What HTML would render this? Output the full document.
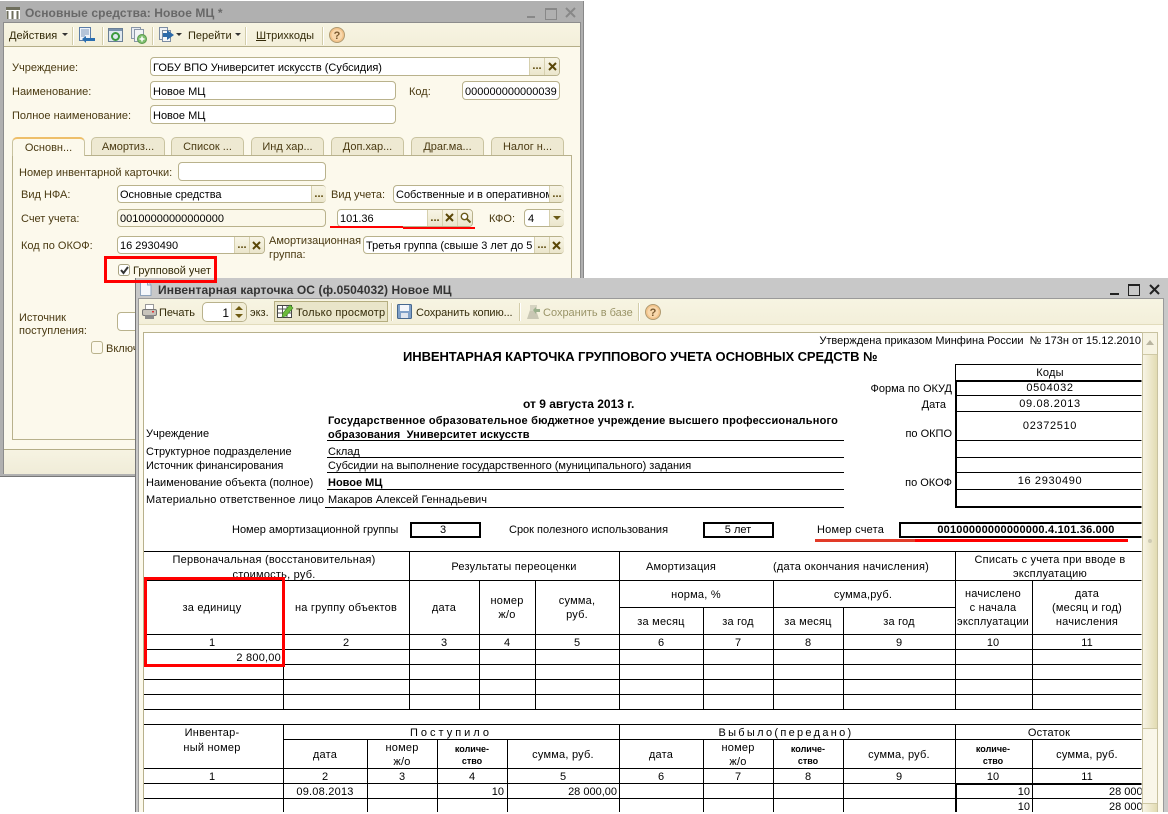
<!DOCTYPE html>
<html lang="ru"><head><meta charset="utf-8"><title>Основные средства</title>
<style>
html,body{margin:0;padding:0;background:#fff}
body{position:relative;width:1168px;height:812px;overflow:hidden;font:11px/14px "Liberation Sans",Arial,sans-serif;color:#000}
div,span.a,svg.a{position:absolute}
.t{position:absolute;white-space:nowrap;margin-top:-6px}
.c{width:300px;margin-left:-150px;text-align:center}
.r{width:400px;margin-left:-400px;text-align:right}
.b{font-weight:bold}
.l{color:#4a3a12}
.f{background:#fff;border:1px solid #b9b28c;border-radius:4px;box-sizing:border-box}
.ro{background:#fbf8ea}
.fb{background:linear-gradient(#f8f5e6,#ebe6cc);border-left:1px solid #d6d0ae;box-sizing:border-box;width:15px;color:#5a4708;text-align:center;font-weight:bold;font-size:11px;line-height:20px}
.tab{background:#eee9d2;border:1px solid #c9c3a0;border-bottom:none;border-radius:5px 5px 0 0;box-sizing:border-box;height:18px;top:137px;color:#4a3a12;text-align:center;line-height:19px;white-space:nowrap}
.sep{width:1px;background:#d3cdaa;border-right:1px solid #fff}
.h{height:1px;background:#000}
.v{width:1px;background:#000}
.red{background:#f00}
.s9{font-size:9px;font-weight:bold;letter-spacing:0}
.sp{letter-spacing:.22px}
.d{letter-spacing:.65px}
</style></head><body>

<!-- BACK WINDOW -->
<div style="left:0;top:1px;width:584px;height:476px;background:#b0b0b0;border-right:1px solid #888;border-bottom:1px solid #777;box-sizing:border-box"></div>
<div style="left:3px;top:22px;width:578px;height:452px;background:#fcf9ec;border:1px solid #8c8c8c;box-sizing:border-box"></div>
<div style="left:4px;top:23px;width:576px;height:23px;background:linear-gradient(#f7f4e2,#f3efda);border-bottom:1px solid #b5ae88"></div>
<div style="left:4px;top:449px;width:576px;height:24px;background:linear-gradient(#f6f3e2,#f0ecd8);border-top:1px solid #b5ae88"></div>

<svg class="a" style="left:6px;top:6px" width="15" height="14" viewBox="0 0 15 14"><rect x="0" y="1" width="14" height="12" fill="#fff"/><rect x="0" y="1" width="14" height="3" fill="#6e6e5c"/><path d="M1.500 5v8M6.500 5v8M11.500 5v8" stroke="#6e6e5c" stroke-width="2"/></svg>
<span class="t b" style="left:25px;top:12px;color:#686868;font-size:12px;letter-spacing:.1px">Основные средства: Новое МЦ *</span>
<div style="left:527px;top:16px;width:8px;height:2px;background:#888"></div>
<div style="left:545px;top:8px;width:10px;height:9px;border:1px solid #888;border-top-width:2px"></div>
<svg class="a" style="left:565px;top:7px" width="11" height="11" viewBox="0 0 11 11"><path d="M1 1l9 9M10 1l-9 9" stroke="#888" stroke-width="2"/></svg>

<!-- back toolbar -->
<span class="t l" style="left:9px;top:35px;color:#332a08">Действия</span>
<svg class="a" style="left:62px;top:33px" width="6" height="4"><path d="M0 0h6L3 3z" fill="#333"/></svg>
<div class="sep" style="left:72px;top:27px;height:18px"></div>
<svg class="a" style="left:79px;top:27px" width="17" height="17" viewBox="0 0 17 17"><rect x=".5" y=".5" width="11" height="13" fill="#eef3fa" stroke="#5b7da8"/><path d="M2 3h8M2 5h8M2 7h8M2 9h4" stroke="#7a95b8"/><path d="M3 12l4-3v2h9v3H7v2z" fill="#2a6eb0"/></svg>
<div class="sep" style="left:102px;top:27px;height:18px"></div>
<svg class="a" style="left:108px;top:28px" width="15" height="15" viewBox="0 0 15 15"><rect x=".5" y=".5" width="14" height="13" fill="#dfe8ef" stroke="#6a7f96"/><rect x="1" y="1" width="13" height="2" fill="#7a93ad"/><circle cx="7.500" cy="8.500" r="3.500" fill="none" stroke="#3d9a3d" stroke-width="2"/></svg>
<svg class="a" style="left:131px;top:27px" width="16" height="17" viewBox="0 0 16 17"><rect x=".5" y=".5" width="9" height="11" fill="#e8ecf2" stroke="#8a97a8"/><rect x="3.500" y="2.500" width="9" height="12" fill="#f1f3f6" stroke="#8a97a8"/><circle cx="11" cy="12" r="4.500" fill="#7fbf6f" stroke="#5a9a4c"/><path d="M11 9.500v5M8.500 12h5" stroke="#fff" stroke-width="1.500"/></svg>
<div class="sep" style="left:152px;top:27px;height:18px"></div>
<svg class="a" style="left:159px;top:27px" width="16" height="17" viewBox="0 0 16 17"><rect x=".5" y=".5" width="8" height="12" fill="#eef1f5" stroke="#7d8da3"/><rect x="3.500" y="3.500" width="8" height="11" fill="#f5f6f8" stroke="#7d8da3"/><path d="M4 6h4V3l7 5-7 5v-3H4z" fill="#2c69a8"/></svg>
<svg class="a" style="left:176px;top:33px" width="6" height="4"><path d="M0 0h6L3 3z" fill="#333"/></svg>
<span class="t" style="left:188px;top:35px;color:#332a08">Перейти</span>
<svg class="a" style="left:235px;top:33px" width="6" height="4"><path d="M0 0h6L3 3z" fill="#333"/></svg>
<div class="sep" style="left:245px;top:27px;height:18px"></div>
<span class="t" style="left:256px;top:35px;color:#332a08"><u>Ш</u>трихкоды</span>
<div class="sep" style="left:322px;top:27px;height:18px"></div>
<svg class="a" style="left:329px;top:27px" width="16" height="16" viewBox="0 0 16 16"><circle cx="8" cy="8" r="7.500" fill="#f3c48c" stroke="#b09a70"/><circle cx="8" cy="8" r="5.500" fill="#f8d8ac"/><text x="8" y="12" font-family="Liberation Sans" font-size="11" font-weight="bold" text-anchor="middle" fill="#7a5a30">?</text></svg>

<!-- back fields -->
<span class="t l" style="left:12px;top:67px">Учреждение:</span>
<div class="f" style="left:150px;top:57px;width:410px;height:19px;overflow:hidden"></div>
<span class="t" style="left:153px;top:67px">ГОБУ ВПО Университет искусств (Субсидия)</span>
<div class="fb" style="left:529px;top:58px;height:17px;line-height:17px">...</div>
<div class="fb" style="left:544px;top:58px;height:17px;border-radius:0 3px 3px 0"></div>
<svg class="a" style="left:548px;top:62px" width="9" height="9"><path d="M1 1l7 7M8 1L1 8" stroke="#5a4708" stroke-width="2"/></svg>

<span class="t l" style="left:12px;top:91px">Наименование:</span>
<div class="f" style="left:150px;top:81px;width:246px;height:19px"></div>
<span class="t" style="left:153px;top:91px">Новое МЦ</span>
<span class="t l" style="left:409px;top:91px">Код:</span>
<div class="f" style="left:462px;top:81px;width:98px;height:19px"></div>
<span class="t" style="left:465px;top:91px">000000000000039</span>
<span class="t l" style="left:12px;top:115px">Полное наименование:</span>
<div class="f" style="left:150px;top:105px;width:246px;height:19px"></div>
<span class="t" style="left:153px;top:115px">Новое МЦ</span>

<!-- tabs -->
<div style="left:12px;top:155px;width:560px;height:285px;border:1px solid #b8b18c;box-sizing:border-box"></div>
<div class="tab" style="left:12px;width:73px;top:137px;height:19px;background:#fcf9ec;border-top:2px solid #eebf6a;line-height:18px;z-index:1">Основн...</div>
<div class="tab" style="left:91px;width:74px">Амортиз...</div>
<div class="tab" style="left:171px;width:73px">Список ...</div>
<div class="tab" style="left:251px;width:73px">Инд хар...</div>
<div class="tab" style="left:331px;width:73px">Доп.хар...</div>
<div class="tab" style="left:411px;width:73px">Драг.ма...</div>
<div class="tab" style="left:491px;width:73px">Налог н...</div>

<span class="t l" style="left:19px;top:172px">Номер инвентарной карточки:</span>
<div class="f" style="left:178px;top:162px;width:148px;height:19px"></div>

<span class="t l" style="left:21px;top:194px">Вид НФА:</span>
<div class="f" style="left:117px;top:185px;width:209px;height:18px"></div>
<span class="t" style="left:120px;top:194px">Основные средства</span>
<div class="fb" style="left:311px;top:186px;height:16px;line-height:16px;border-radius:0 3px 3px 0">...</div>
<span class="t l" style="left:331px;top:194px">Вид учета:</span>
<div class="f" style="left:393px;top:185px;width:171px;height:18px;overflow:hidden"></div>
<span class="t" style="left:396px;top:194px;width:153px;overflow:hidden">Собственные и в оперативном</span>
<div class="fb" style="left:549px;top:186px;height:16px;line-height:16px;border-radius:0 3px 3px 0">...</div>

<span class="t l" style="left:21px;top:218px">Счет учета:</span>
<div class="f ro" style="left:117px;top:209px;width:209px;height:18px"></div>
<span class="t" style="left:120px;top:218px">00100000000000000</span>
<div class="f" style="left:337px;top:209px;width:136px;height:18px"></div>
<span class="t" style="left:340px;top:218px">101.36</span>
<div class="fb" style="left:427px;top:210px;height:16px;line-height:16px">...</div>
<div class="fb" style="left:442px;top:210px;height:16px"></div>
<svg class="a" style="left:445px;top:213px" width="9" height="9"><path d="M1 1l7 7M8 1L1 8" stroke="#5a4708" stroke-width="2"/></svg>
<div class="fb" style="left:457px;top:210px;height:16px;border-radius:0 3px 3px 0"></div>
<svg class="a" style="left:460px;top:212px" width="11" height="11"><circle cx="4.500" cy="4.500" r="3.200" fill="#fff" stroke="#6a5a18" stroke-width="1.400"/><path d="M7 7l3.500 3.500" stroke="#6a5a18" stroke-width="2"/></svg>
<span class="t l" style="left:489px;top:218px">КФО:</span>
<div class="f" style="left:524px;top:209px;width:40px;height:18px"></div>
<span class="t" style="left:528px;top:218px">4</span>
<div class="fb" style="left:549px;top:210px;height:16px;border-radius:0 3px 3px 0"></div>
<svg class="a" style="left:553px;top:216px" width="8" height="5"><path d="M0 0h8L4 4z" fill="#6a5a18"/></svg>

<span class="t l" style="left:21px;top:245px">Код по ОКОФ:</span>
<div class="f" style="left:117px;top:236px;width:148px;height:18px"></div>
<span class="t" style="left:120px;top:245px">16 2930490</span>
<div class="fb" style="left:234px;top:237px;height:16px;line-height:16px">...</div>
<div class="fb" style="left:249px;top:237px;height:16px;border-radius:0 3px 3px 0"></div>
<svg class="a" style="left:252px;top:241px" width="9" height="9"><path d="M1 1l7 7M8 1L1 8" stroke="#5a4708" stroke-width="2"/></svg>
<span class="t l" style="left:269px;top:240px">Амортизационная</span>
<span class="t l" style="left:269px;top:254px">группа:</span>
<div class="f" style="left:363px;top:236px;width:201px;height:18px"></div>
<span class="t" style="left:366px;top:245px;width:168px;overflow:hidden">Третья группа (свыше 3 лет до 5</span>
<div class="fb" style="left:534px;top:237px;height:16px;line-height:16px">...</div>
<div class="fb" style="left:549px;top:237px;height:16px;border-radius:0 3px 3px 0"></div>
<svg class="a" style="left:552px;top:241px" width="9" height="9"><path d="M1 1l7 7M8 1L1 8" stroke="#5a4708" stroke-width="2"/></svg>

<div class="f" style="left:118px;top:264px;width:12px;height:12px;border-radius:3px;border-color:#a8a280"></div>
<svg class="a" style="left:120px;top:266px" width="9" height="9"><path d="M1 4l2.500 3L8 1" fill="none" stroke="#333" stroke-width="2"/></svg>
<span class="t l" style="left:133px;top:270px;color:#332a08">Групповой учет</span>

<span class="t l" style="left:19px;top:317px">Источник</span>
<span class="t l" style="left:19px;top:330px">поступления:</span>
<div class="f" style="left:117px;top:312px;width:40px;height:19px"></div>
<div class="f" style="left:91px;top:341px;width:12px;height:13px;border-radius:3px;background:#fcf9ec"></div>
<span class="t l" style="left:106px;top:348px">Включ</span>

<!-- FRONT WINDOW -->
<div style="left:135px;top:278px;width:1033px;height:534px;background:#c8c8c8;border-left:1px solid #777;box-sizing:border-box"></div>
<div style="left:138px;top:298px;width:1026px;height:514px;background:#fcf9ec;border:1px solid #9a9a9a;border-bottom:none;box-sizing:border-box"></div>
<div style="left:139px;top:299px;width:1024px;height:25px;background:linear-gradient(#f7f4e2,#f3efda);border-bottom:1px solid #e2dcbc"></div>

<svg class="a" style="left:139px;top:281px" width="13" height="15" viewBox="0 0 13 15"><path d="M1.500 .5h7l3.500 3.500v10.500H1.500z" fill="#f4f7fb" stroke="#8ea3bc"/><path d="M8.500 .5v3.500H12" fill="#dfe7f1" stroke="#8ea3bc"/></svg>
<span class="t b" style="left:158px;top:289px;color:#333;font-size:12px;letter-spacing:.1px">Инвентарная карточка ОС (ф.0504032) Новое МЦ</span>
<div style="left:1110px;top:293px;width:9px;height:2px;background:#222"></div>
<div style="left:1128px;top:284px;width:10px;height:9px;border:1px solid #222;border-top-width:2px"></div>
<svg class="a" style="left:1149px;top:284px" width="11" height="11" viewBox="0 0 11 11"><path d="M1 1l9 9M10 1l-9 9" stroke="#222" stroke-width="2"/></svg>

<!-- front toolbar -->
<svg class="a" style="left:142px;top:304px" width="15" height="16" viewBox="0 0 15 16"><rect x="3.500" y=".5" width="8" height="5" fill="#fff" stroke="#999"/><rect x=".5" y="5.500" width="14" height="6" rx="1.500" fill="#c8c4bc" stroke="#777"/><rect x="10" y="7" width="2" height="1.500" fill="#d33"/><rect x="3" y="11" width="9" height="4" fill="#8a8a8a"/></svg>
<span class="t" style="left:159px;top:312px;color:#332a08">Печать</span>
<div class="f" style="left:202px;top:302px;width:45px;height:20px;border-radius:5px"></div>
<span class="t r" style="left:229px;top:312px;font-size:12px">1</span>
<div class="a" style="left:231px;top:303px;width:15px;height:18px;background:#f1edd6;border-left:1px solid #d6d0ae;border-radius:0 4px 4px 0;box-sizing:border-box"></div>
<svg class="a" style="left:235px;top:306px" width="8" height="12"><path d="M0 4l4-4 4 4zM0 8l4 4 4-4z" fill="#6e5a10"/></svg>
<span class="t" style="left:250px;top:312px;color:#332a08">экз.</span>
<div style="left:274px;top:301px;width:114px;height:21px;background:#e9e5c9;border:1px solid #b5ae80;box-sizing:border-box"></div>
<svg class="a" style="left:277px;top:303px" width="17" height="17" viewBox="0 0 17 17"><rect x=".5" y="2.500" width="14" height="12" fill="#fff" stroke="#444"/><path d="M1 6h14M1 10h14M5.500 3v12M10 3v12" stroke="#555"/><path d="M5 14l1-4 7-8 3 3-7 8z" fill="#6cbb3c" stroke="#3f8a22" stroke-width=".6"/></svg>
<span class="t" style="left:296px;top:312px;color:#332a08;letter-spacing:.2px">Только просмотр</span>
<div class="sep" style="left:391px;top:303px;height:18px"></div>
<svg class="a" style="left:397px;top:304px" width="15" height="15" viewBox="0 0 15 15"><rect x=".5" y=".5" width="14" height="14" rx="1" fill="#7fa0c8" stroke="#47688f"/><rect x="3" y="1" width="9" height="6" fill="#f4f6fa"/><rect x="4" y="9" width="7" height="5" fill="#dfe5ee"/></svg>
<span class="t" style="left:416px;top:312px;color:#332a08;letter-spacing:-.1px">Сохранить копию...</span>
<div class="sep" style="left:519px;top:303px;height:18px"></div>
<svg class="a" style="left:527px;top:304px" width="14" height="16" viewBox="0 0 14 16"><path d="M0 15l3-9h6l3 9z" fill="#c9c7b4"/><rect x="3" y="1" width="7" height="6" fill="#d6d4c2"/><path d="M6 6l3-3v2h4v3H9v2z" fill="#9ab08c"/></svg>
<span class="t" style="left:543px;top:312px;color:#9a9468">Сохранить в базе</span>
<div class="sep" style="left:638px;top:303px;height:18px"></div>
<svg class="a" style="left:645px;top:304px" width="16" height="16" viewBox="0 0 16 16"><circle cx="8" cy="8" r="7.500" fill="#f3c48c" stroke="#b09a70"/><circle cx="8" cy="8" r="5.500" fill="#f8d8ac"/><text x="8" y="12" font-family="Liberation Sans" font-size="11" font-weight="bold" text-anchor="middle" fill="#7a5a30">?</text></svg>

<!-- page panel -->
<div style="left:143px;top:332px;width:999px;height:480px;background:#fff;border-top:1px solid #b8b18c;border-left:1px solid #b8b18c;box-sizing:border-box"></div>
<div style="left:1142px;top:332px;width:16px;height:480px;background:linear-gradient(90deg,#f8f5e6,#e2dbb2);border:1px solid #c8c2a0;border-bottom:none;box-sizing:border-box"></div>
<div style="left:1143px;top:333px;width:14px;height:22px;background:#f6f3e2;border-bottom:1px solid #cfc9a6;box-sizing:border-box"></div>
<svg class="a" style="left:1146px;top:340px" width="8" height="6"><path d="M0 5l4-5 4 5z" fill="#b8b4a0"/></svg>
<div style="left:1143px;top:728px;width:14px;height:76px;background:#f9f6e9;border-top:1px solid #cfc9a6;border-bottom:1px solid #cfc9a6;box-sizing:border-box"></div>
<div style="left:1148px;top:539px;width:4px;height:4px;border-radius:2px;background:#cfcbb4"></div>

<div style="left:0;top:0;width:1168px;height:812px;clip-path:polygon(144px 333px,1141.500px 333px,1141.500px 812px,144px 812px)">

<span class="t r" style="left:1141px;top:340px">Утверждена приказом Минфина России&nbsp; № 173н от 15.12.2010</span>
<span class="t b" style="left:403px;top:356px;font-size:13px;letter-spacing:-.08px">ИНВЕНТАРНАЯ КАРТОЧКА ГРУППОВОГО УЧЕТА ОСНОВНЫХ СРЕДСТВ №</span>
<span class="t b" style="left:523px;top:403px;font-size:12px">от 9 августа 2013 г.</span>

<span class="t" style="left:146px;top:433px">Учреждение</span>
<span class="t b" style="left:328px;top:420px;letter-spacing:.21px">Государственное образовательное бюджетное учреждение высшего профессионального</span>
<span class="t b" style="left:328px;top:434px;letter-spacing:.12px">образования&nbsp; Университет искусств</span>
<div class="h" style="left:327px;top:440px;width:517px"></div>
<span class="t" style="left:146px;top:451px">Структурное подразделение</span>
<span class="t" style="left:328px;top:451px">Склад</span>
<div class="h" style="left:327px;top:457px;width:517px"></div>
<span class="t" style="left:146px;top:465px">Источник финансирования</span>
<span class="t" style="left:328px;top:465px">Субсидии на выполнение государственного (муниципального) задания</span>
<div class="h" style="left:327px;top:472px;width:517px"></div>
<span class="t" style="left:146px;top:482px">Наименование объекта (полное)</span>
<span class="t b" style="left:328px;top:482px">Новое МЦ</span>
<div class="h" style="left:327px;top:489px;width:517px"></div>
<span class="t" style="left:146px;top:499px;letter-spacing:.14px">Материально ответственное лицо</span>
<span class="t" style="left:328px;top:499px">Макаров Алексей Геннадьевич</span>
<div class="h" style="left:325px;top:507px;width:519px"></div>

<!-- codes -->
<span class="t r" style="left:952px;top:388px">Форма по ОКУД</span>
<span class="t r" style="left:946px;top:404px">Дата</span>
<span class="t r" style="left:952px;top:433px">по ОКПО</span>
<span class="t r" style="left:952px;top:482px">по ОКОФ</span>
<div class="h" style="left:955px;top:364px;width:190px"></div>
<div class="v" style="left:955px;top:364px;height:16px"></div>
<div style="left:955px;top:380px;width:190px;height:2px;background:#000"></div>
<div style="left:955px;top:380px;width:2px;height:128px;background:#000"></div>
<div class="h" style="left:955px;top:395px;width:190px"></div>
<div class="h" style="left:955px;top:411px;width:190px"></div>
<div class="h" style="left:955px;top:440px;width:190px"></div>
<div class="h" style="left:955px;top:457px;width:190px"></div>
<div class="h" style="left:955px;top:472px;width:190px"></div>
<div class="h" style="left:955px;top:489px;width:190px"></div>
<div style="left:955px;top:506px;width:190px;height:2px;background:#000"></div>
<span class="t c sp" style="left:1050px;top:372px">Коды</span>
<span class="t c d" style="left:1050px;top:387px">0504032</span>
<span class="t c d" style="left:1050px;top:403px">09.08.2013</span>
<span class="t c d" style="left:1050px;top:425px">02372510</span>
<span class="t c d" style="left:1050px;top:480px">16 2930490</span>

<!-- boxes -->
<span class="t" style="left:232px;top:529px">Номер амортизационной группы</span>
<div style="left:410px;top:522px;width:71px;height:16px;border:2px solid #000;box-sizing:border-box"></div>
<span class="t c" style="left:443px;top:529px">3</span>
<span class="t" style="left:509px;top:529px">Срок полезного использования</span>
<div style="left:703px;top:522px;width:71px;height:16px;border:2px solid #000;box-sizing:border-box"></div>
<span class="t c" style="left:738px;top:529px">5 лет</span>
<span class="t" style="left:817px;top:529px;letter-spacing:.2px">Номер счета</span>
<div style="left:899px;top:522px;width:260px;height:16px;border:2px solid #000;box-sizing:border-box"></div>
<span class="t c b" style="left:1026px;top:529px;letter-spacing:.2px">00100000000000000.4.101.36.000</span>

<!-- table 1 lines -->
<div class="h" style="left:144px;top:551px;width:1000px"></div>
<div class="h" style="left:144px;top:580px;width:1000px"></div>
<div class="h" style="left:619px;top:607px;width:336px"></div>
<div class="h" style="left:144px;top:634px;width:1000px"></div>
<div class="h" style="left:144px;top:649px;width:1000px"></div>
<div class="h" style="left:144px;top:664px;width:1000px"></div>
<div class="h" style="left:144px;top:679px;width:1000px"></div>
<div class="h" style="left:144px;top:694px;width:1000px"></div>
<div class="h" style="left:144px;top:709px;width:1000px"></div>
<div class="v" style="left:283px;top:580px;height:130px"></div>
<div class="v" style="left:409px;top:551px;height:159px"></div>
<div class="v" style="left:479px;top:580px;height:130px"></div>
<div class="v" style="left:535px;top:580px;height:130px"></div>
<div class="v" style="left:619px;top:551px;height:159px"></div>
<div class="v" style="left:703px;top:607px;height:103px"></div>
<div class="v" style="left:773px;top:580px;height:130px"></div>
<div class="v" style="left:843px;top:607px;height:103px"></div>
<div class="v" style="left:955px;top:551px;height:159px"></div>
<div class="v" style="left:1032px;top:580px;height:130px"></div>

<!-- table 1 text -->
<span class="t c sp" style="left:274px;top:559px">Первоначальная (восстановительная)</span>
<span class="t c sp" style="left:274px;top:574px">стоимость, руб.</span>
<span class="t c sp" style="left:514px;top:566px">Результаты переоценки</span>
<span class="t c sp" style="left:681px;top:566px">Амортизация</span>
<span class="t c sp" style="left:851px;top:566px">(дата окончания начисления)</span>
<span class="t c sp" style="left:1050px;top:559px">Списать с учета при вводе в</span>
<span class="t c sp" style="left:1050px;top:573px">эксплуатацию</span>
<span class="t c sp" style="left:212px;top:607px">за единицу</span>
<span class="t c sp" style="left:346px;top:607px">на группу объектов</span>
<span class="t c sp" style="left:444px;top:607px">дата</span>
<span class="t c sp" style="left:507px;top:600px">номер</span>
<span class="t c sp" style="left:507px;top:614px">ж/о</span>
<span class="t c sp" style="left:577px;top:600px">сумма,</span>
<span class="t c sp" style="left:577px;top:614px">руб.</span>
<span class="t c sp" style="left:696px;top:594px">норма, %</span>
<span class="t c sp" style="left:863px;top:594px">сумма,руб.</span>
<span class="t c sp" style="left:661px;top:621px">за месяц</span>
<span class="t c sp" style="left:738px;top:621px">за год</span>
<span class="t c sp" style="left:808px;top:621px">за месяц</span>
<span class="t c sp" style="left:899px;top:621px">за год</span>
<span class="t c sp" style="left:993px;top:593px">начислено</span>
<span class="t c sp" style="left:993px;top:607px">с начала</span>
<span class="t c sp" style="left:993px;top:621px">эксплуатации</span>
<span class="t c sp" style="left:1087px;top:593px">дата</span>
<span class="t c sp" style="left:1087px;top:607px">(месяц и год)</span>
<span class="t c sp" style="left:1087px;top:621px">начисления</span>

<span class="t c" style="left:212px;top:642px">1</span>
<span class="t c" style="left:346px;top:642px">2</span>
<span class="t c" style="left:444px;top:642px">3</span>
<span class="t c" style="left:507px;top:642px">4</span>
<span class="t c" style="left:577px;top:642px">5</span>
<span class="t c" style="left:661px;top:642px">6</span>
<span class="t c" style="left:738px;top:642px">7</span>
<span class="t c" style="left:808px;top:642px">8</span>
<span class="t c" style="left:899px;top:642px">9</span>
<span class="t c" style="left:993px;top:642px">10</span>
<span class="t c" style="left:1087px;top:642px">11</span>
<span class="t r sp" style="left:281px;top:657px">2 800,00</span>

<!-- table 2 lines -->
<div class="h" style="left:144px;top:724px;width:1000px"></div>
<div class="h" style="left:283px;top:739px;width:860px"></div>
<div class="h" style="left:144px;top:768px;width:1000px"></div>
<div class="h" style="left:144px;top:783px;width:1000px"></div>
<div class="h" style="left:144px;top:798px;width:1000px"></div>
<div class="v" style="left:283px;top:724px;height:88px"></div>
<div class="v" style="left:367px;top:739px;height:73px"></div>
<div class="v" style="left:437px;top:739px;height:73px"></div>
<div class="v" style="left:507px;top:739px;height:73px"></div>
<div class="v" style="left:619px;top:724px;height:88px"></div>
<div class="v" style="left:703px;top:739px;height:73px"></div>
<div class="v" style="left:773px;top:739px;height:73px"></div>
<div class="v" style="left:843px;top:739px;height:73px"></div>
<div class="v" style="left:955px;top:724px;height:88px"></div>
<div class="v" style="left:1032px;top:739px;height:73px"></div>
<div style="left:955px;top:783px;width:190px;height:2px;background:#000"></div>
<div style="left:955px;top:783px;width:2px;height:29px;background:#000"></div>

<!-- table 2 text -->
<span class="t c sp" style="left:212px;top:732px">Инвентар-</span>
<span class="t c sp" style="left:212px;top:747px">ный номер</span>
<span class="t c" style="left:451px;top:732px;letter-spacing:3px">Поступило</span>
<span class="t c" style="left:786px;top:732px;letter-spacing:2.300px">Выбыло(передано)</span>
<span class="t c sp" style="left:1049px;top:732px">Остаток</span>
<span class="t c sp" style="left:325px;top:754px">дата</span>
<span class="t c sp" style="left:402px;top:747px">номер</span>
<span class="t c sp" style="left:402px;top:761px">ж/о</span>
<span class="t c s9" style="left:472px;top:748px">количе-</span>
<span class="t c s9" style="left:472px;top:760px">ство</span>
<span class="t c sp" style="left:563px;top:754px">сумма, руб.</span>
<span class="t c sp" style="left:661px;top:754px">дата</span>
<span class="t c sp" style="left:738px;top:747px">номер</span>
<span class="t c sp" style="left:738px;top:761px">ж/о</span>
<span class="t c s9" style="left:808px;top:748px">количе-</span>
<span class="t c s9" style="left:808px;top:760px">ство</span>
<span class="t c sp" style="left:899px;top:754px">сумма, руб.</span>
<span class="t c s9" style="left:993px;top:748px">количе-</span>
<span class="t c s9" style="left:993px;top:760px">ство</span>
<span class="t c sp" style="left:1087px;top:754px">сумма, руб.</span>

<span class="t c" style="left:212px;top:776px">1</span>
<span class="t c" style="left:325px;top:776px">2</span>
<span class="t c" style="left:402px;top:776px">3</span>
<span class="t c" style="left:472px;top:776px">4</span>
<span class="t c" style="left:563px;top:776px">5</span>
<span class="t c" style="left:661px;top:776px">6</span>
<span class="t c" style="left:738px;top:776px">7</span>
<span class="t c" style="left:808px;top:776px">8</span>
<span class="t c" style="left:899px;top:776px">9</span>
<span class="t c" style="left:993px;top:776px">10</span>
<span class="t c" style="left:1087px;top:776px">11</span>

<span class="t c sp" style="left:325px;top:791px">09.08.2013</span>
<span class="t r" style="left:504px;top:791px">10</span>
<span class="t r" style="left:617px;top:791px">28 000,00</span>
<span class="t r" style="left:1030px;top:791px">10</span>
<span class="t r" style="left:1030px;top:806px">10</span>
<span class="t" style="left:1109px;top:791px">28 000,00</span>
<span class="t" style="left:1109px;top:806px">28 000,00</span>
</div>

<!-- RED ANNOTATIONS -->
<div style="left:104px;top:256px;width:113px;height:27px;border:3px solid #f00;box-sizing:border-box"></div>
<div class="red" style="left:330px;top:226px;width:73px;height:2px"></div>
<div class="red" style="left:403px;top:227px;width:72px;height:2px"></div>
<div style="left:144px;top:577px;width:141px;height:90px;border:3px solid #f00;box-sizing:border-box"></div>
<div style="left:815px;top:539px;width:100px;height:3px;background:#e23a28"></div>
<div class="red" style="left:915px;top:539px;width:213px;height:3px"></div>
</body></html>
